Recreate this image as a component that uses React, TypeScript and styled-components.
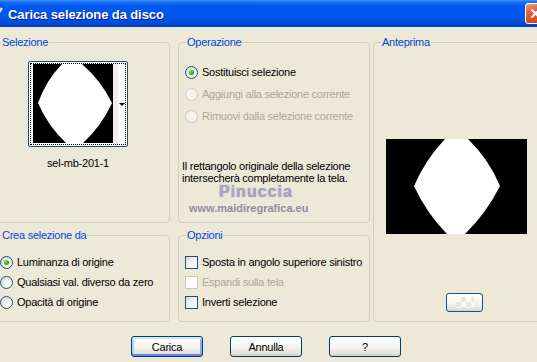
import React from "react";
import styled, { createGlobalStyle } from "styled-components";

const GlobalStyle = createGlobalStyle`
  html, body {
    margin: 0;
    padding: 0;
    background: #ece9d8;
  }
  body {
    font-family: "Liberation Sans", Arial, sans-serif;
    font-size: 11px;
    letter-spacing: -0.25px;
    color: #000;
  }
`;

const Window = styled.div`
  width: 537px;
  height: 362px;
  overflow: hidden;
  background: #ece9d8;
`;

const TitleBar = styled.div`
  height: 27px;
  display: flex;
  align-items: center;
  background: linear-gradient(
    180deg,
    #3d95ff 0px,
    #1a6ef4 2px,
    #0058ee 6px,
    #0055ea 18px,
    #004ad9 23px,
    #003fc3 27px
  );
`;

const TitleIcon = styled.svg`
  margin-left: -13px;
  flex: none;
`;

const Title = styled.div`
  flex: 1;
  margin-left: 5px;
  margin-top: 1px;
  color: #fff;
  font-weight: bold;
  font-size: 13px;
  letter-spacing: -0.1px;
  text-shadow: 1px 1px 0 #0a1d8a;
`;

const CloseButton = styled.div`
  width: 21px;
  height: 21px;
  box-sizing: border-box;
  margin-right: -9px;
  border: 1px solid #fff;
  border-radius: 3px;
  background: linear-gradient(160deg, #f0a58d 0%, #e0603c 35%, #c8421c 100%);
  display: flex;
  align-items: center;
  justify-content: center;
`;

const Body = styled.div`
  display: flex;
  gap: 3px;
  margin-left: -7px;
  padding-top: 15px;
  width: 565px;
`;

const Columns = styled.div`
  display: grid;
  grid-template-columns: 177px 192px;
  grid-template-rows: 181px 87px;
  column-gap: 8px;
  row-gap: 12px;
  flex: none;
`;

const Group = styled.div<{ $width?: number }>`
  box-sizing: border-box;
  ${(p) => (p.$width ? `width: ${p.$width}px;` : "")}
  border: 1px solid #d0d0bf;
  border-radius: 4px;
  display: flex;
  flex-direction: column;
  align-items: flex-start;
`;

const Legend = styled.div`
  margin: -7px 0 0 7px;
  padding: 0 1px;
  height: 13px;
  line-height: 13px;
  background: #ece9d8;
  color: #0046d5;
  white-space: nowrap;
`;

const SelectionBody = styled.div`
  align-self: stretch;
  display: flex;
  flex-direction: column;
  align-items: center;
  padding-right: 7px;
`;

const Thumb = styled.div`
  margin-top: 12px;
  width: 100px;
  height: 86px;
  box-sizing: border-box;
  border: 1px solid #1c5180;
  border-radius: 2px;
  background: #fff;
  padding: 1px;
`;

const Focus = styled.div`
  height: 100%;
  box-sizing: border-box;
  border: 1px dotted #000;
  display: flex;
  padding-left: 2px;
`;

const Strip = styled.div`
  width: 5px;
  background: #eeeeee;
`;

const DropArrow = styled.div`
  flex: 1;
  display: flex;
  align-items: center;
  justify-content: center;
  &::after {
    content: "";
    border-left: 3px solid transparent;
    border-right: 3px solid transparent;
    border-top: 3px solid #000;
  }
`;

const ThumbName = styled.div`
  margin-top: 10px;
  line-height: 13px;
`;

const OptionList = styled.div<{ $top: number; $gap: number }>`
  display: flex;
  flex-direction: column;
  gap: ${(p) => p.$gap}px;
  margin-top: ${(p) => p.$top}px;
  padding-left: 6px;
`;

const Option = styled.div<{ $disabled?: boolean }>`
  display: flex;
  align-items: center;
  gap: 4px;
  height: 13px;
  line-height: 13px;
  white-space: nowrap;
  color: ${(p) => (p.$disabled ? "#aca899" : "#000")};
`;

const RadioMark = styled.span<{ $checked?: boolean; $disabled?: boolean }>`
  width: 13px;
  height: 13px;
  box-sizing: border-box;
  flex: none;
  border-radius: 50%;
  border: 1px solid ${(p) => (p.$disabled ? "#cac8bb" : "#1c5180")};
  background: ${(p) =>
    p.$disabled
      ? "#f4f3ee"
      : "radial-gradient(circle at 70% 70%, #ffffff 0%, #f2f1ea 40%, #d6d2c2 100%)"};
  display: flex;
  align-items: center;
  justify-content: center;
  &::after {
    content: "";
    display: ${(p) => (p.$checked ? "block" : "none")};
    width: 5px;
    height: 5px;
    border-radius: 50%;
    background: radial-gradient(circle at 35% 35%, #5fe05a 0%, #21a121 70%);
  }
`;

const CheckMark = styled.span<{ $disabled?: boolean }>`
  width: 13px;
  height: 13px;
  box-sizing: border-box;
  flex: none;
  border: 1px solid ${(p) => (p.$disabled ? "#cac8bb" : "#1c5180")};
  background: ${(p) =>
    p.$disabled ? "#fff" : "linear-gradient(135deg, #dcdad2 0%, #f4f3ee 55%, #ffffff 100%)"};
`;

const Description = styled.div`
  margin: 37px 0 0 3px;
  width: 186px;
  line-height: 12px;
`;

const Watermark = styled.div`
  display: flex;
  flex-direction: column;
  align-items: flex-start;
  letter-spacing: 0;
`;

const WatermarkName = styled.div`
  margin: 0 0 0 40px;
  font-size: 16px;
  line-height: 16px;
  font-weight: bold;
  letter-spacing: 1px;
  color: #a9a7c6;
  text-shadow: 0 0 1px #7a7898;
`;

const WatermarkUrl = styled.div`
  margin: 2px 0 0 10px;
  font-size: 11px;
  line-height: 13px;
  font-weight: bold;
  color: #8e8ca8;
`;

const PreviewImage = styled.svg`
  margin: 90px 0 0 12px;
  display: block;
`;

const SmallButton = styled.div`
  margin: 59px 0 0 72px;
  width: 37px;
  height: 19px;
  box-sizing: border-box;
  border: 1px solid #1c5180;
  border-radius: 3px;
  background: linear-gradient(180deg, #ffffff 0%, #f3f3ef 60%, #dcd8cc 100%);
  display: flex;
  align-items: center;
  justify-content: center;
  &::after {
    content: "";
    width: 18px;
    height: 11px;
    background: repeating-conic-gradient(#e4e2da 0% 25%, #ffffff 0% 50%) 0 0 / 10px 10px;
    opacity: 0.8;
  }
`;

const ButtonRow = styled.div`
  display: flex;
  justify-content: center;
  gap: 27px;
  margin-top: 14px;
  padding-right: 5px;
`;

const Button = styled.button<{ $default?: boolean }>`
  width: 72px;
  height: 21px;
  padding: 0;
  font-family: "Liberation Sans", Arial, sans-serif;
  font-size: 11px;
  letter-spacing: -0.25px;
  color: #000;
  border: 1px solid #003c74;
  border-radius: 3px;
  background: linear-gradient(180deg, #ffffff 0%, #f4f4f0 55%, #e6e3da 85%, #d6d0c5 100%);
  box-shadow: ${(p) =>
    p.$default
      ? "inset 0 2px 0 #cee7ff, inset 0 -2px 0 #6982ee, inset 2px 0 0 #b8d2fa, inset -2px 0 0 #89ade4"
      : "none"};
`;

const SelectionShape = ({ w, h, d }: { w: number; h: number; d: string }) => (
  <svg width={w} height={h} viewBox={`0 0 ${w} ${h}`} style={{ display: "block" }}>
    <rect width={w} height={h} fill="#000" />
    <path d={d} fill="#fff" />
  </svg>
);

export default function App() {
  return (
    <Window>
      <GlobalStyle />
      <TitleBar>
        <TitleIcon width="16" height="16" viewBox="0 0 16 16">
          <path d="M3 9 L7 13 L15 2" stroke="#d8d8d8" strokeWidth="2.5" fill="none" />
        </TitleIcon>
        <Title>Carica selezione da disco</Title>
        <CloseButton>
          <svg width="11" height="11" viewBox="0 0 11 11">
            <path d="M1.5 1.5 L9.5 9.5 M9.5 1.5 L1.5 9.5" stroke="#fff" strokeWidth="2" />
          </svg>
        </CloseButton>
      </TitleBar>

      <Body>
        <Columns>
          <Group>
            <Legend>Selezione</Legend>
            <SelectionBody>
              <Thumb>
                <Focus>
                  <SelectionShape
                    w={80}
                    h={79}
                    d="M29 0 L49 0 Q68 16.5 79 39 Q68.5 62 50 79 L33 79 Q15 62 5 39 Q12.7 17 29 0 Z"
                  />
                  <Strip />
                  <DropArrow />
                </Focus>
              </Thumb>
              <ThumbName>sel-mb-201-1</ThumbName>
            </SelectionBody>
          </Group>

          <Group>
            <Legend>Operazione</Legend>
            <OptionList $top={17} $gap={9}>
              <Option>
                <RadioMark $checked />
                Sostituisci selezione
              </Option>
              <Option $disabled>
                <RadioMark $disabled />
                Aggiungi alla selezione corrente
              </Option>
              <Option $disabled>
                <RadioMark $disabled />
                Rimuovi dalla selezione corrente
              </Option>
            </OptionList>
            <Description>
              Il rettangolo originale della selezione intersecherà completamente la tela.
            </Description>
            <Watermark>
              <WatermarkName>Pinuccia</WatermarkName>
              <WatermarkUrl>www.maidiregrafica.eu</WatermarkUrl>
            </Watermark>
          </Group>

          <Group>
            <Legend>Crea selezione da</Legend>
            <OptionList $top={14} $gap={7}>
              <Option>
                <RadioMark $checked />
                Luminanza di origine
              </Option>
              <Option>
                <RadioMark />
                Qualsiasi val. diverso da zero
              </Option>
              <Option>
                <RadioMark />
                Opacità di origine
              </Option>
            </OptionList>
          </Group>

          <Group>
            <Legend>Opzioni</Legend>
            <OptionList $top={14} $gap={7}>
              <Option>
                <CheckMark />
                Sposta in angolo superiore sinistro
              </Option>
              <Option $disabled>
                <CheckMark $disabled />
                Espandi sulla tela
              </Option>
              <Option>
                <CheckMark />
                Inverti selezione
              </Option>
            </OptionList>
          </Group>
        </Columns>

        <Group $width={185}>
          <Legend>Anteprima</Legend>
          <PreviewImage width="141" height="95" viewBox="0 0 141 95">
            <rect width="141" height="95" fill="#000" />
            <path
              d="M59 0 L82 0 Q103 20.5 114 47 Q100.5 74 79 95 L61 95 Q40.4 74 28 47 Q39.3 20.7 59 0 Z"
              fill="#fff"
            />
          </PreviewImage>
          <SmallButton />
        </Group>
      </Body>

      <ButtonRow>
        <Button $default>Carica</Button>
        <Button>Annulla</Button>
        <Button>?</Button>
      </ButtonRow>
    </Window>
  );
}
